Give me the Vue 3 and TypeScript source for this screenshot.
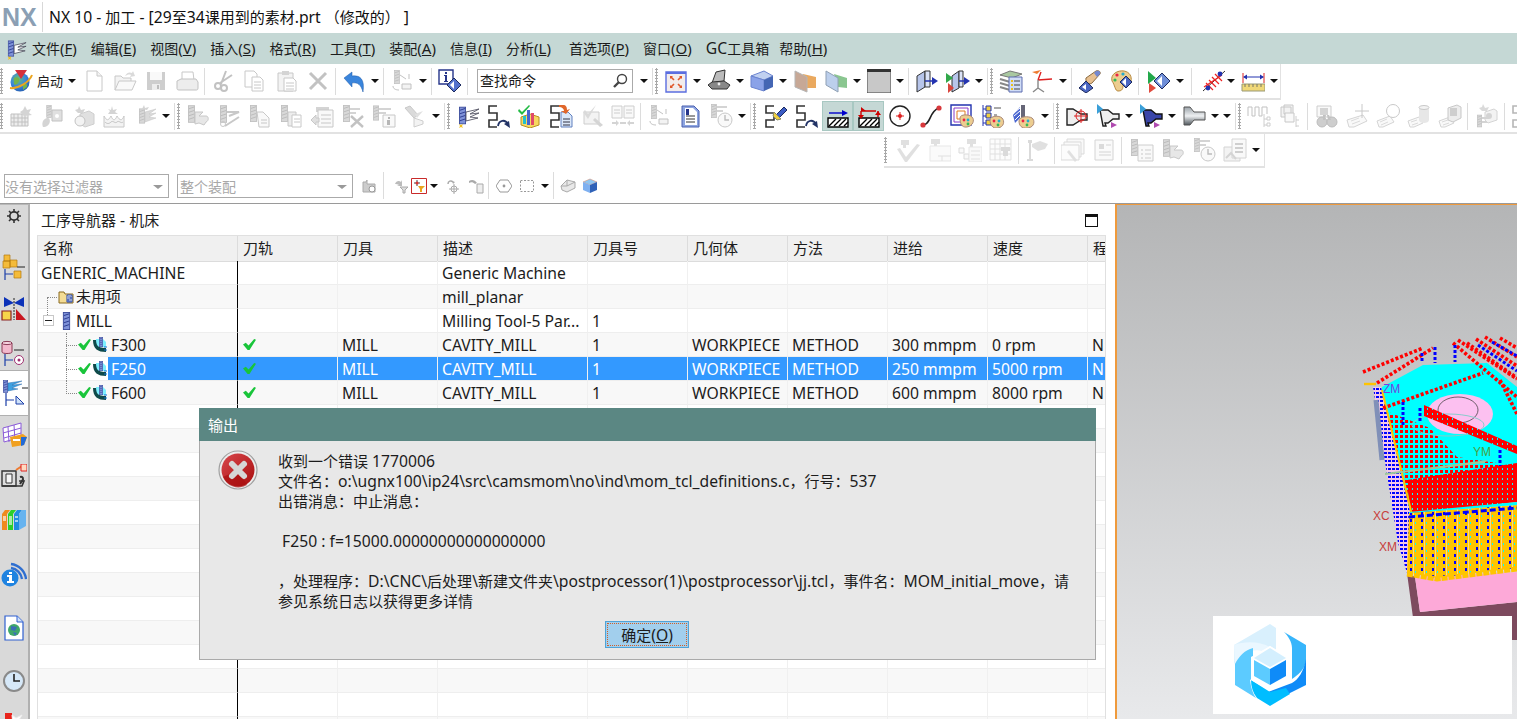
<template>
  <div class="app">
    <svg class="defs" aria-hidden="true">
      <defs>
        <linearGradient id="g-red" x1="0" y1="0" x2="1" y2="1"><stop offset="0" stop-color="#d8474c" /><stop offset="1" stop-color="#a80d0d" /></linearGradient>
        <radialGradient id="g-ball" cx=".4" cy=".35" r=".8"><stop offset="0" stop-color="#6cc070" /><stop offset=".5" stop-color="#3a86dc" /><stop offset="1" stop-color="#1d4fa0" /></radialGradient>
        <linearGradient id="g-steel" x1="0" y1="0" x2="0" y2="1"><stop offset="0" stop-color="#9aa2a8" /><stop offset=".5" stop-color="#eef0f2" /><stop offset="1" stop-color="#4e565c" /></linearGradient>
        <pattern id="p-red" width="5" height="5" patternUnits="userSpaceOnUse"><rect width="5" height="5" fill="#00ffff" shape-rendering="crispEdges" /><rect width="3" height="3" fill="#ff0000" shape-rendering="crispEdges" /></pattern>
        <pattern id="p-solid" width="5" height="5" patternUnits="userSpaceOnUse"><rect width="5" height="5" fill="#ff0000" shape-rendering="crispEdges" /><rect x="2" y="3" width="1" height="2" fill="#00ffff" shape-rendering="crispEdges" /></pattern>
        <pattern id="p-blue" width="4" height="4" patternUnits="userSpaceOnUse"><rect width="4" height="4" fill="#f4c8e8" shape-rendering="crispEdges" /><rect width="3" height="2" fill="#0000ff" shape-rendering="crispEdges" /></pattern>
        <pattern id="p-orange" width="11" height="7" patternUnits="userSpaceOnUse"><rect width="11" height="7" fill="#ffc400" shape-rendering="crispEdges" /><rect x="2" y="1" width="2" height="3" fill="#0000ff" shape-rendering="crispEdges" /><rect x="7" y="4" width="1" height="2" fill="#00ffff" shape-rendering="crispEdges" /><rect x="5" y="0" width="1" height="7" fill="#f8d890" shape-rendering="crispEdges" /></pattern>

        <symbol id="mill" viewBox="0 0 8 20"><rect x=".5" y=".5" width="7" height="19" fill="#7f92d8" stroke="#3a4a9a" /><path d="M1 4l6-2M1 8l6-2M1 12l6-2M1 16l6-2" stroke="#26358a" /></symbol>
        <symbol id="i-globe" viewBox="0 0 24 24"><circle cx="11" cy="13" r="9.5" fill="url(#g-ball)" /><path d="M5 9c3-2 6 0 5 3s-4 5-5 3zM14 15c3-1 5 0 4 3l-4 3z" fill="#74b44a" /><path d="M1 19C8 20 20 14 23 6" stroke="#eba51f" stroke-width="2" fill="none" /><path d="M6 1h12l-6 9z" fill="#d5303d" /></symbol>
        <symbol id="i-doc" viewBox="0 0 24 24"><path d="M5 2h10l5 5v15H5z" fill="#fff" stroke="#666" /><path d="M15 2v5h5" fill="#ddd" stroke="#666" /></symbol>
        <symbol id="i-open" viewBox="0 0 24 24"><path d="M2 21V7h6l2 2h8v3" fill="#ddd" stroke="#666" /><path d="M2 21l4-9h17l-4 9z" fill="#eee" stroke="#666" /><path d="M12 7c2-4 5-4 7-3l1-2 2 5-5 1 1-2c-2-1-4 0-6 1z" fill="#999" /></symbol>
        <symbol id="i-save" viewBox="0 0 24 24"><path d="M3 3h18v18H3z" fill="#777" /><path d="M6 3h12v8H6z" fill="#eee" /><path d="M8 15h8v6H8z" fill="#ccc" /><path d="M13 16h2v4h-2z" fill="#444" /></symbol>
        <symbol id="i-print" viewBox="0 0 24 24"><path d="M7 3h11l1 8H7z" fill="#fff" stroke="#666" /><path d="M2 12l4-2h15l2 3v6c0 2-1 2-2 2H4c-2 0-2-1-2-2z" fill="#ccc" stroke="#555" /></symbol>
        <symbol id="i-cut" viewBox="0 0 24 24"><path d="M15 2l-5 13M21 6L9 14" stroke="#555" stroke-width="2" /><circle cx="7" cy="17" r="3" fill="none" stroke="#555" stroke-width="2" /><circle cx="13" cy="19" r="3" fill="none" stroke="#555" stroke-width="2" /></symbol>
        <symbol id="i-copy" viewBox="0 0 24 24"><path d="M3 2h9l3 3v13H3z" fill="#fff" stroke="#666" /><path d="M10 8h8l3 3v11H10z" fill="#fff" stroke="#666" /><path d="M12 13h7M12 16h7M12 19h7" stroke="#666" /></symbol>
        <symbol id="i-paste" viewBox="0 0 24 24"><path d="M3 4h15v18H3z" fill="#ddd" stroke="#666" /><path d="M7 2h7v4H7z" fill="#888" /><path d="M9 9h9l3 3v10H9z" fill="#fff" stroke="#666" /><path d="M11 14h8M11 17h8M11 20h8" stroke="#666" /></symbol>
        <symbol id="i-x" viewBox="0 0 24 24"><path d="M4 4l16 16M20 4L4 20" stroke="#555" stroke-width="3" /></symbol>
        <symbol id="i-undo" viewBox="0 0 24 24"><path d="M2 9l8-6v4c8-1 13 3 11 16-2-7-5-10-11-9v4z" fill="#3a85dc" stroke="#1f5aa8" stroke-width=".5" /></symbol>
        <symbol id="i-mach" viewBox="0 0 24 24"><use href="#mill" x="4" y="1" width="6" height="14" /><path d="M10 6l6 4M12 15h9v5h-9z" fill="#ddd" stroke="#555" /><path d="M3 17c0 3 3 4 6 4M19 5v5" stroke="#555" fill="none" /></symbol>
        <symbol id="i-info" viewBox="0 0 24 24"><path d="M1 1h14v14H1z" fill="#fff" stroke="#26358a" stroke-width="1.4" /><path d="M7 3h2v2H7zM6 6h3v6h1v1H6v-1h1V7H6z" fill="#26358a" /><path d="M16 9l7 7-7 7-7-7z" fill="#5472cc" stroke="#1c2a5e" /><path d="M16 12v8l-4-4z" fill="#fff" /></symbol>
        <symbol id="i-search" viewBox="0 0 16 16"><circle cx="10" cy="6" r="4.5" fill="#fff" stroke="#444" stroke-width="1.4" /><path d="M7 9l-5 5" stroke="#444" stroke-width="2.4" /></symbol>
        <symbol id="i-fit" viewBox="0 0 24 24"><path d="M2 3h20v20H2z" fill="#f2ecec" stroke="#5b6ee0" stroke-width="1.4" /><path d="M2 3h20v2H2z" fill="#5b6ee0" /><path d="M7 8l3 3M17 8l-3 3M7 18l3-3M17 18l-3-3" stroke="#e0572a" stroke-width="1.6" /><path d="M6 7h3L6 10zM18 7h-3l3 3zM6 19h3l-3-3zM18 19h-3l3-3z" fill="#e0572a" /></symbol>
        <symbol id="i-laptop" viewBox="0 0 24 24"><path d="M5 14L9 3l9-2-1 11z" fill="#bbb" stroke="#333" /><path d="M1 16l4-3 12-1 6 4-3 4H5z" fill="#888" stroke="#333" /><circle cx="12" cy="15" r="1.4" fill="#eee" /></symbol>
        <symbol id="i-cube" viewBox="0 0 24 24"><path d="M1 7l13-5 9 5-9 4z" fill="#c0d0f0" stroke="#6a83cf" /><path d="M1 7l13 4v11L1 18z" fill="#8aa2e8" stroke="#6a83cf" /><path d="M14 11l9-4v11l-9 4z" fill="#4466b4" /></symbol>
        <symbol id="i-twoa" viewBox="0 0 24 24"><path d="M10 5l13 3v11H12z" fill="#eaa95f" /><path d="M2 2l12 6v15L2 18z" fill="#c7a896" stroke="#b5b5b5" /></symbol>
        <symbol id="i-twob" viewBox="0 0 24 24"><path d="M10 5l13 4v10l-9-1z" fill="#8ac690" /><path d="M2 2l12 7v14L2 16z" fill="#bccfec" stroke="#8fa0b4" /></symbol>
        <symbol id="i-gray" viewBox="0 0 24 24"><path d="M0 1h24v23H0z" fill="#c8c8c8" stroke="#444" /><path d="M0 0h24v3H0z" fill="#333" /></symbol>
        <symbol id="i-boxarr" viewBox="0 0 24 24"><path d="M2 7l8-5v16l-8 5z" fill="#b7c5ea" stroke="#333" /><path d="M10 2h5v16h-5z" fill="#dbe3f7" stroke="#333" /><path d="M10 12h8" stroke="#2333b0" stroke-width="1.5" /><path d="M17 8l6 4-6 4z" fill="#2333b0" /></symbol>
        <symbol id="i-boxplay" viewBox="0 0 24 24"><path d="M6 7l7-5v17l-7 4z" fill="#b7c5ea" stroke="#333" /><path d="M13 2h4v16h-4z" fill="#dbe3f7" stroke="#333" /><path d="M13 12h6" stroke="#2333b0" stroke-width="1.5" /><path d="M18 8l6 4-6 4z" fill="#2333b0" /><path d="M0 4l7 5-7 5z" fill="#31a84a" /><path d="M2 14l6 5-6 5z" fill="#d9453d" /></symbol>
        <symbol id="i-stack" viewBox="0 0 24 24"><path d="M1 6l10-4 12 3-10 4z" fill="#a9c8a0" stroke="#777" /><path d="M1 10l10 3M1 14l10 3M1 18l10 3" stroke="#888" stroke-width="2" /><path d="M10 8h13v15H10z" fill="#d0dcf6" stroke="#5c6cb0" /><path d="M12 11h2v2h-2zM12 15h2v2h-2zM12 19h2v2h-2z" fill="#e8c020" /><path d="M15 12h6M15 16h6M15 20h6" stroke="#444" /></symbol>
        <symbol id="i-axis" viewBox="0 0 24 24"><path d="M8 11l14-1M8 11l3-8" stroke="#d22" stroke-width="1.4" /><path d="M2 3l9-2-4 4z" fill="#ee7a30" /><path d="M8 11v8l-5 4M8 19l6 4" stroke="#888" stroke-width="1.4" fill="none" /></symbol>
        <symbol id="i-hand" viewBox="0 0 24 24"><path d="M8 9l10-7c3-1 5 1 4 3l-8 9c-2 2-7 0-6-5z" fill="#e8c090" stroke="#8a6a40" /><path d="M18 2c3-1 5 1 4 3l-3 3-3-4z" fill="#7488d0" /><path d="M8 12l7 7-7 5-7-5z" fill="#4b66c2" stroke="#1c2a5e" /><path d="M8 15v6l-4-3z" fill="#fff" /></symbol>
        <symbol id="i-pal" viewBox="0 0 24 24"><path d="M3 12C1 5 9 1 15 2s8 6 7 10-8 1-8 5-2 5-5 5-3-6-6-10z" fill="#eccd90" stroke="#b88a40" /><circle cx="8" cy="6" r="1.6" fill="#e24" /><circle cx="14" cy="5" r="1.6" fill="#2ac" /><circle cx="6" cy="11" r="1.6" fill="#3b5" /><path d="M17 7l6 6-6 6-6-6z" fill="#4b66c2" stroke="#1c2a5e" /><path d="M17 9v8l-4-4z" fill="#fff" /></symbol>
        <symbol id="i-playd" viewBox="0 0 24 24"><path d="M1 2l8 7-8 6z" fill="#22a84a" /><path d="M2 14l7 5-7 5z" fill="#e04a3d" /><path d="M15 4l8 8-8 8-8-8z" fill="#6f8ed8" stroke="#1c2a5e" /><path d="M15 7v10l-5-5z" fill="#fff" /></symbol>
        <symbol id="i-spring" viewBox="0 0 24 24"><path d="M1 22L23 2" stroke="#333" /><path d="M4 14l7 7M7 11l7 7M10 8l7 7M13 5l7 7M2 18L20 6" stroke="#e22" stroke-width="1.2" /><circle cx="18" cy="5" r="2.4" fill="#2333b0" /><circle cx="6" cy="19" r="2.4" fill="#2333b0" /></symbol>
        <symbol id="i-measure" viewBox="0 0 24 24"><path d="M2 4v10M23 4v10" stroke="#d22" /><path d="M3 8h19" stroke="#2333b0" /><path d="M2 8l4-2.5v5zM23 8l-4-2.5v5z" fill="#2333b0" /><path d="M1 15h23v7H1z" fill="#f0d878" stroke="#997" /><path d="M4 15v3M8 15v3M12 15v3M16 15v3M20 15v3" stroke="#776" /></symbol>
        <symbol id="i-mgrid" viewBox="0 0 24 24"><path d="M2 10h17v12H2z" fill="#ccc" stroke="#555" /><path d="M5 10v12M9 10v12M13 10v12M16 10v12M2 14h17M2 18h17" stroke="#555" /><path d="M16 2l2 4 4-1-2 4 3 2-8 1-4-4 3-2z" fill="#888" /></symbol>
        <symbol id="i-mpart" viewBox="0 0 24 24"><use href="#mill" x="6" y="1" width="6" height="13" /><path d="M12 6h10v11H12z" fill="#aaa" stroke="#555" /><circle cx="17" cy="12" r="2" fill="#fff" /><path d="M3 23c-2-5 1-9 5-9 3 0 3 9-5 9z" fill="#888" /></symbol>
        <symbol id="i-mcam" viewBox="0 0 24 24"><path d="M9 10l9-3 5 3v10l-9 3-5-3z" fill="#aaa" stroke="#777" /><circle cx="9" cy="17" r="5" fill="#ddd" stroke="#555" /><path d="M8 2l2 4 4-1-2 4h-5l-3-3 3-1z" fill="#888" /></symbol>
        <symbol id="i-mwave" viewBox="0 0 24 24"><path d="M2 12c3 5 4 5 7 0 2 5 4 5 6 0 3 5 5 5 7 0v11H2z" fill="#ddd" stroke="#666" /><path d="M3 18c2 2 4 2 6 0s4 2 6 0 4 2 6 0" fill="none" stroke="#555" /><path d="M10 2l1 4 4-1-2 3 3 2h-10l2-3-2-2 3 1z" fill="#888" /></symbol>
        <symbol id="i-mtool" viewBox="0 0 24 24"><use href="#mill" x="6" y="3" width="6" height="18" /><path d="M12 8l11-3-7 5 7-1-7 4 7 1-11 4z" fill="#999" stroke="#555" stroke-width=".5" /><path d="M11 1l1 3 4-1-2 3-5-1z" fill="#888" /></symbol>
        <symbol id="i-twrench" viewBox="0 0 24 24"><use href="#mill" x="2" y="1" width="7" height="18" /><path d="M9 8h8l-4 4h7c3 0 3 5 0 6l-2 3-5-2-4 1z" fill="#bbb" stroke="#666" /></symbol>
        <symbol id="i-tcut" viewBox="0 0 24 24"><use href="#mill" x="3" y="1" width="7" height="18" /><path d="M10 8h12l-10 4M8 22l14-9" stroke="#666" stroke-width="2" fill="none" /><circle cx="6" cy="20" r="2.5" fill="none" stroke="#666" /></symbol>
        <symbol id="i-tcopy" viewBox="0 0 24 24"><use href="#mill" x="2" y="1" width="7" height="17" /><path d="M9 8h6l6 6v9H11z" fill="#eee" stroke="#666" /><path d="M13 16h6M13 19h6" stroke="#666" /></symbol>
        <symbol id="i-tpaste" viewBox="0 0 24 24"><use href="#mill" x="2" y="1" width="7" height="17" /><path d="M9 8h8v14H9z" fill="#ccc" stroke="#666" /><path d="M13 11h9v12h-9z" fill="#fff" stroke="#666" /><path d="M15 15h6M15 18h6" stroke="#666" /></symbol>
        <symbol id="i-tdoc" viewBox="0 0 24 24"><path d="M6 3h13v5H6z" fill="#888" /><path d="M8 6h15v17H8z" fill="#eee" stroke="#666" /><path d="M11 11h10M11 15h10M11 19h10" stroke="#666" /><path d="M1 16l5-5v3h3v4H6v3z" fill="#aaa" stroke="#666" /></symbol>
        <symbol id="i-tx" viewBox="0 0 24 24"><use href="#mill" x="2" y="1" width="7" height="17" /><path d="M9 5h10M9 9h6" stroke="#888" stroke-width="2" /><path d="M10 12l12 11M22 12L10 23" stroke="#555" stroke-width="2.4" /></symbol>
        <symbol id="i-tinfo" viewBox="0 0 24 24"><use href="#mill" x="1" y="1" width="6" height="16" /><path d="M7 5h12M7 9h7" stroke="#888" stroke-width="2" /><path d="M11 11h12v12H11z" fill="#eee" stroke="#666" /><path d="M16 13h2v2h-2zM15 16h3v5h-3z" fill="#333" /></symbol>
        <symbol id="i-tdown" viewBox="0 0 24 24"><path d="M2 4l5-2 8 9-4 3z" fill="#999" stroke="#666" /><path d="M11 14v9l9-3v-3z" fill="#ddd" stroke="#777" /><path d="M12 10l8-3-6 7z" fill="#aaa" /></symbol>
        <symbol id="i-millp" viewBox="0 0 24 24"><use href="#mill" x="3" y="2" width="7" height="19" /><path d="M10 8l13-3-9 5 9-1-9 4 8 1-12 3z" fill="#fff" stroke="#445" stroke-width=".8" /><path d="M3 20l2 1 2-1-1 2 1 2-2-1-2 1 1-2z" fill="#f0c020" /></symbol>
        <symbol id="i-snake" viewBox="0 0 24 24"><path d="M10 2H2v7h8v7H2v7h8" fill="none" stroke="#333" stroke-width="1.6" /></symbol>
        <symbol id="i-snakearr" viewBox="0 0 24 24"><use href="#i-snake" /><path d="M11 22c1-6 7-7 10-2" fill="none" stroke="#223366" stroke-width="1.8" /><path d="M23 24l-1-7-5 3z" fill="#223366" /></symbol>
        <symbol id="i-checkbox" viewBox="0 0 24 24"><path d="M3 13l9-3 9 3v8l-9 3-9-3z" fill="#f6d860" stroke="#b89020" /><path d="M9 6h3v15H9z" fill="#4565d0" /><path d="M13 9h3v12h-3z" fill="#e04a6a" /><path d="M5 12h3v8H5z" fill="#20c0d0" /><path d="M1 5l3 3 7-7 1 1-8 9-4-4z" fill="#22bb44" /></symbol>
        <symbol id="i-snakedoc" viewBox="0 0 24 24"><use href="#i-snake" /><path d="M12 8h7l4 4v11H12z" fill="#dbe7f8" stroke="#6080c0" /><path d="M14 15h7M14 18h7M14 21h7" stroke="#334" /><path d="M10 1h4c3 0 4 2 4 5l3-1-4 5-5-3h3c0-2-2-4-5-4z" fill="#e0662a" /></symbol>
        <symbol id="i-verify" viewBox="0 0 24 24"><path d="M4 8h15v12H4z" fill="#ddd" stroke="#777" /><path d="M5 6l3 4 8-9-8 14-5-7z" fill="#999" /><path d="M15 14l8 7-3 2-7-7z" fill="#888" /></symbol>
        <symbol id="i-docs" viewBox="0 0 24 24"><path d="M1 2h10v12H1zM13 2h10v12H13z" fill="#eee" stroke="#777" /><path d="M3 6h6M3 9h6M15 6h6M15 9h6" stroke="#777" /><path d="M1 18h4v-2l3 3-3 3v-2H1zM23 18h-4v-2l-3 3 3 3v-2h4z" fill="#888" /><path d="M9 18h6v2H9z" fill="#888" /></symbol>
        <symbol id="i-docblue" viewBox="0 0 24 24"><path d="M4 2h12l5 5v16H4z" fill="#8ea5e0" stroke="#4a60b0" /><path d="M7 4h8l4 4v13H7z" fill="#fff" /><path d="M8 12h9M8 15h9M8 18h9" stroke="#333" /><path d="M8 5h3v6H8z" fill="#26358a" /></symbol>
        <symbol id="i-tclock" viewBox="0 0 24 24"><use href="#mill" x="2" y="0" width="6" height="14" /><path d="M8 3h10M8 7h6" stroke="#888" stroke-width="2" /><circle cx="16" cy="16" r="7" fill="#eee" stroke="#666" /><path d="M16 11v5h4" stroke="#444" stroke-width="1.4" fill="none" /></symbol>
        <symbol id="i-snakelight" viewBox="0 0 24 24"><use href="#i-snake" /><path d="M12 11l8-8 3 3-8 8z" fill="#3b5cc4" stroke="#1c2a5e" /><path d="M10 8l7 7-4 1-4-4z" fill="#f0d040" stroke="#886" /></symbol>
        <symbol id="i-hatchb" viewBox="0 0 24 24"><path d="M2 14h20v9H2z" fill="#fff" stroke="#000" stroke-width="1.4" /><path d="M3 22l7-7M8 22l7-7M13 22l7-7M18 22l4-4" stroke="#000" stroke-width="1.4" /><path d="M3 9h14" stroke="#0000cc" stroke-width="1.4" /><path d="M16 6l6 3-6 3z" fill="#0000cc" /></symbol>
        <symbol id="i-hatchr" viewBox="0 0 24 24"><path d="M2 14h20v9H2z" fill="#fff" stroke="#000" stroke-width="1.4" /><path d="M3 22l7-7M8 22l7-7M13 22l7-7M18 22l4-4" stroke="#000" stroke-width="1.4" /><path d="M4 7h15M4 7v6M21 7v6" stroke="#cc0000" stroke-width="1.4" /><path d="M4 3L9 7 4 7zM1 11h6l-3 4zM18 11h6l-3-4z" fill="#cc0000" /></symbol>
        <symbol id="i-target" viewBox="0 0 24 24"><circle cx="12" cy="12" r="10" fill="#fff" stroke="#222" stroke-width="1.4" /><path d="M12 8v8M8 12h8" stroke="#d22" /><circle cx="12" cy="12" r="2" fill="#d22" /></symbol>
        <symbol id="i-curve" viewBox="0 0 24 24"><path d="M4 21c8 0 6-14 16-17" fill="none" stroke="#222" stroke-width="1.6" /><circle cx="4" cy="21" r="2.6" fill="#d8383c" /><circle cx="20" cy="4" r="2.6" fill="#d8383c" /></symbol>
        <symbol id="i-sqpal" viewBox="0 0 24 24"><path d="M1 1h20v20H1z" fill="#fff" stroke="#2333b0" stroke-width="1.4" /><path d="M4 4h14v14H4z" fill="none" stroke="#8a3bc8" /><path d="M7 7h8v8H7z" fill="none" stroke="#e07a20" /><path d="M10 14c0-4 9-4 12-1s1 9-5 10-7-5-7-9z" fill="#eccd90" stroke="#a87" /><circle cx="14" cy="16" r="1.4" fill="#e24" /><circle cx="18" cy="16" r="1.4" fill="#2ac" /><circle cx="18" cy="20" r="1.4" fill="#3b5" /></symbol>
        <symbol id="i-treepal" viewBox="0 0 24 24"><path d="M2 1v21M2 5h3M2 12h3M2 19h3" stroke="#2333b0" /><path d="M5 2h5v5H5zM5 9h5v5H5zM5 16h5v5H5z" fill="#f0d040" stroke="#2333b0" /><path d="M13 4h7M13 11h3" stroke="#555" /><path d="M9 16c0-4 9-5 12-2s2 9-4 10-8-4-8-8z" fill="#eccd90" stroke="#a87" /><circle cx="13" cy="17" r="1.4" fill="#e24" /><circle cx="18" cy="17" r="1.4" fill="#2ac" /><circle cx="17" cy="21" r="1.4" fill="#3b5" /></symbol>
        <symbol id="i-toolpal" viewBox="0 0 24 24"><path d="M1 11L8 3v11l-5 5z" fill="#4a66d0" /><path d="M3 8l5-4M2 12l6-5M3 16l5-5" stroke="#fff" /><path d="M9 1h4v14H9z" fill="#667" /><path d="M7 17c0-5 10-5 13-3s3 9-4 10-9-3-9-7z" fill="#eccd90" stroke="#a87" /><circle cx="11" cy="17" r="1.4" fill="#e24" /><circle cx="16" cy="17" r="1.4" fill="#2ac" /><circle cx="15" cy="21" r="1.4" fill="#3b5" /></symbol>
        <symbol id="i-shapet" viewBox="0 0 24 24"><path d="M2 5h6l8 5h6v6h-6l-8 5H2z" fill="#eee" stroke="#222" stroke-width="1.4" /><circle cx="16" cy="12" r="5" fill="none" stroke="#d22" /><path d="M16 5v14M9 12h14" stroke="#d22" /></symbol>
        <symbol id="i-shapea" viewBox="0 0 24 24"><path d="M4 6h8l5 4h6v5h-6l-5 4H9l1 3H7z" fill="#eee" stroke="#222" stroke-width="1.4" /><path d="M1 0l6 5-6 5z" fill="#3a9fd8" /><path d="M15 18l6 3-6 3z" fill="#b04ab0" /></symbol>
        <symbol id="i-shapeb" viewBox="0 0 24 24"><path d="M4 6h8l5 4h6v5h-6l-5 4H9l1 3H7z" fill="#3a45a8" stroke="#111" stroke-width="1.4" /><path d="M1 0l6 5-6 5z" fill="#3a9fd8" /><path d="M15 18l6 3-6 3z" fill="#b04ab0" /></symbol>
        <symbol id="i-shapec" viewBox="0 0 24 24"><path d="M2 3h6l4 5h11v8H12l-4 5H2z" fill="url(#g-steel)" stroke="#555" /></symbol>
        <symbol id="i-steps" viewBox="0 0 24 24"><path d="M1 12V3h4v9h3V3h4v9h3V3h5v7" fill="none" stroke="#555" /><path d="M17 10v13M17 15h4M17 21h4" stroke="#777" /><path d="M20 13h3v3h-3zM20 19h3v3h-3z" fill="#fff" stroke="#777" /></symbol>
        <symbol id="i-boxtree" viewBox="0 0 24 24"><path d="M3 3h10v10H3zM6 1h9v9H6z" fill="#ddd" stroke="#666" /><path d="M7 9h9v9H7z" fill="#eee" stroke="#666" /><path d="M18 12v11M18 16h3M18 22h3" stroke="#777" /></symbol>
        <symbol id="i-binoc" viewBox="0 0 24 24"><path d="M3 2h14v11H3z" fill="#eee" stroke="#777" /><path d="M6 4h8v7H6z" fill="#888" /><circle cx="8" cy="18" r="5" fill="#777" stroke="#444" /><circle cx="18" cy="18" r="5" fill="#777" stroke="#444" /><path d="M9 11h3l-1 5h-2zM13 11h2l2 5h-3z" fill="#555" /></symbol>
        <symbol id="i-tagplus" viewBox="0 0 24 24"><path d="M2 16l16-5 4 6-13 6H4z" fill="#eee" stroke="#888" /><path d="M6 17l8-3M7 20l8-3" stroke="#999" /><path d="M17 0v14M10 7h14" stroke="#666" /></symbol>
        <symbol id="i-tagcirc" viewBox="0 0 24 24"><path d="M1 17l13-5 4 6-11 5H3z" fill="#eee" stroke="#888" /><path d="M4 18l7-3M5 21l7-3" stroke="#999" /><circle cx="17" cy="7" r="6.5" fill="#fff" stroke="#666" /></symbol>
        <symbol id="i-tagcyl" viewBox="0 0 24 24"><path d="M1 17l11-4 4 6-9 4H3z" fill="#eee" stroke="#888" /><path d="M4 18l6-2M5 21l6-2" stroke="#999" /><path d="M12 3h10v13c0 4-10 4-10 0z" fill="#bbb" /><ellipse cx="17" cy="3.5" rx="5" ry="2" fill="#ddd" stroke="#666" /></symbol>
        <symbol id="i-tagbox" viewBox="0 0 24 24"><path d="M1 17l11-4 4 6-9 4H3z" fill="#eee" stroke="#888" /><path d="M4 18l6-2M5 21l6-2" stroke="#999" /><path d="M10 4l9-3 4 2v11l-8 4-5-2z" fill="#ccc" stroke="#666" /><path d="M12 4h7v8h-7z" fill="#777" /></symbol>
        <symbol id="i-camt" viewBox="0 0 24 24"><path d="M11 8l9-3 3 2v9l-9 3-3-3z" fill="#ddd" stroke="#888" /><circle cx="15" cy="12" r="3" fill="#888" /><path d="M9 0l2 4 4-1-2 4H8L5 4l3-1z" fill="#999" /><use href="#mill" x="3" y="10" width="5" height="14" /><path d="M8 14h7M8 18h5" stroke="#888" stroke-width="2" /></symbol>
        <symbol id="i-pcheck" viewBox="0 0 24 24"><path d="M5 2h8v5h-3v3H7V7H5z" fill="#aaa" /><path d="M1 11l3-1 6 9L21 6l3 1-13 17h-2z" fill="#aaa" /></symbol>
        <symbol id="i-pbox" viewBox="0 0 24 24"><path d="M4 1h9v5h-3v4H7V6H4z" fill="#aaa" /><path d="M3 8h21v15H3z" fill="#f2f2f2" stroke="#bbb" /><path d="M11 18h13M15 18v5" stroke="#aaa" /></symbol>
        <symbol id="i-ptree" viewBox="0 0 24 24"><path d="M9 1h9v5h-3v4h-3V6H9z" fill="#aaa" /><path d="M1 10h5v5H1zM6 16h5v5H6z" fill="#eee" stroke="#999" /><path d="M11 9h13v15H11z" fill="#eee" stroke="#bbb" /><path d="M13 13h9M13 17h9M13 21h9" stroke="#aaa" /></symbol>
        <symbol id="i-pgrid" viewBox="0 0 24 24"><path d="M1 1h21v21H1z" fill="#f6f6f6" stroke="#aaa" /><path d="M6 1v21M11 1v21M16 1v21M1 6h21M1 11h21M1 16h21" stroke="#aaa" /><path d="M12 9h9v4h-2v5h-5v-5h-2z" fill="#999" /></symbol>
        <symbol id="i-flag" viewBox="0 0 24 24"><path d="M3 2h4v3H6v16h2v2H2v-2h2V5H3z" fill="#999" /><path d="M7 6l8-3 8 3-3 5-7 2-6-4z" fill="#aaa" /></symbol>
        <symbol id="i-sheets" viewBox="0 0 24 24"><path d="M6 1h17v15H6z" fill="#eee" stroke="#999" /><path d="M3 4h17v15H3z" fill="#f2f2f2" stroke="#999" /><path d="M0 7h18v15H0z" fill="#f6f6f6" stroke="#999" /><path d="M8 12l8 10-2 2-8-10z" fill="#aaa" /></symbol>
        <symbol id="i-sheet" viewBox="0 0 24 24"><path d="M3 2h18v20H3z" fill="#f2f2f2" stroke="#888" /><path d="M7 6h5v5H7z" fill="#999" /><path d="M14 7h5M7 14h12M7 17h12" stroke="#888" /></symbol>
        <symbol id="i-tlist" viewBox="0 0 24 24"><use href="#mill" x="1" y="1" width="7" height="17" /><path d="M8 7h15v16H8z" fill="#eee" stroke="#777" /><path d="M11 11h2v2h-2zM11 15h2v2h-2zM11 19h2v2h-2z" fill="#aaa" /><path d="M15 12h6M15 16h6M15 20h6" stroke="#777" /></symbol>
        <symbol id="i-tdocs" viewBox="0 0 24 24"><path d="M1 9h16v14H1z" fill="#ddd" stroke="#888" /><path d="M9 1h14v19H9z" fill="#eee" stroke="#888" /><path d="M12 6h8M12 10h8M12 14h8" stroke="#555" stroke-width="1.5" /><path d="M3 20l5-5 5 6" fill="none" stroke="#888" stroke-width="2" /></symbol>

        <symbol id="s-dots" viewBox="0 0 16 16"><path d="M2 4h3l1-2v4h8v8H2z" fill="#ccc" stroke="#aaa" /><circle cx="11" cy="11" r="3" fill="#fff" stroke="#999" /></symbol>
        <symbol id="s-fa" viewBox="0 0 16 16"><path d="M2 6c1-3 4-4 6-2l1-2v6H4l2-1c-1-1-3-1-4-1z" fill="#bbb" /><path d="M7 9h8l-3 3v3h-2v-3z" fill="#ddd" stroke="#aaa" /></symbol>
        <symbol id="s-fb" viewBox="0 0 16 16"><path d="M.5.5h15v15H.5z" fill="#fff" stroke="#c92a2a" /><path d="M6 2v6M3 5h6" stroke="#444" /><circle cx="6" cy="5" r="1.5" fill="#d33" /><path d="M7 8h7l-3 3v3H9v-3z" fill="#eba51f" /></symbol>
        <symbol id="s-fc" viewBox="0 0 16 16"><path d="M3 6c0-3 3-4 5-2" fill="none" stroke="#aaa" stroke-width="1.5" /><path d="M8 6l-1-3 3 1z" fill="#aaa" /><circle cx="9" cy="11" r="3" fill="none" stroke="#aaa" /><path d="M9 6v10M4 11h10" stroke="#aaa" /></symbol>
        <symbol id="s-fd" viewBox="0 0 16 16"><path d="M1 3c3-2 6-1 8 2l-2 1C5 4 3 4 1 5z" fill="#aaa" /><path d="M9 6h6v9H9z" fill="#eee" stroke="#aaa" /></symbol>
        <symbol id="s-hex" viewBox="0 0 16 16"><path d="M4 2h8l4 6-4 6H4L0 8z" fill="#fff" stroke="#999" /><circle cx="8" cy="8" r="1.4" fill="#999" /></symbol>
        <symbol id="s-rect" viewBox="0 0 16 16"><path d="M1.5 2.5h13v11h-13z" fill="none" stroke="#999" stroke-dasharray="2 1.5" /></symbol>
        <symbol id="s-box" viewBox="0 0 16 16"><path d="M1 8l6-6 8 2v6l-8 4-5-2z" fill="#e8e8e8" stroke="#aaa" /><path d="M7 2v6l8-4M7 8L1 8" stroke="#aaa" fill="none" /></symbol>
        <symbol id="s-cube" viewBox="0 0 16 16"><path d="M1 4l7-3 7 3-7 3z" fill="#8fc6f2" stroke="#d86" stroke-width=".5" /><path d="M1 4l7 3v8l-7-3z" fill="#7fb0f0" /><path d="M8 7l7-3v8l-7 3z" fill="#2f62b8" /></symbol>

        <symbol id="r-gear" viewBox="0 0 16 16"><circle cx="8" cy="8" r="4.2" fill="none" stroke="#333" stroke-width="1.8" /><path d="M8 1v3M8 12v3M1 8h3M12 8h3M3 3l2 2M11 11l2 2M13 3l-2 2M3 13l2-2" stroke="#333" stroke-width="1.6" /></symbol>
        <symbol id="r-cubes" viewBox="0 0 26 26"><path d="M3 1h6v6H3zM9 6h7v7H9zM2 7h7v7H2z" fill="#f4bb3a" stroke="#b37a10" stroke-width=".7" /><path d="M16 13h8" stroke="#222" /><path d="M4 15v11M4 20h8" stroke="#1c3ea8" stroke-width="1.2" /><path d="M13 17h7v7h-7z" fill="#f4bb3a" stroke="#b37a10" stroke-width=".7" /></symbol>
        <symbol id="r-bow" viewBox="0 0 26 26"><path d="M3 1l10 6 10-6v10l-10-4-10 4z" fill="#0b31b8" /><path d="M13 2v22" stroke="#222" stroke-dasharray="2 1" /><path d="M1 15h9v9H1z" fill="#f6d64a" stroke="#8a2222" stroke-width="1.2" /><path d="M15 13l10 11H15z" fill="#c9151f" /></symbol>
        <symbol id="r-cyl" viewBox="0 0 26 26"><path d="M1 3h10v9c0 2-10 2-10 0z" fill="#f3b8cc" stroke="#8a3a55" /><ellipse cx="6" cy="3" rx="5" ry="1.6" fill="#f7d4e0" stroke="#8a3a55" /><path d="M13 10h10" stroke="#222" /><path d="M4 14v12M4 20h8" stroke="#1c3ea8" stroke-width="1.2" /><circle cx="18" cy="20" r="4.5" fill="#fff" stroke="#a03070" /><circle cx="18" cy="20" r="1.5" fill="#a03070" /></symbol>
        <symbol id="r-tool" viewBox="0 0 26 26"><use href="#mill" x="1" y="0" width="5" height="13" /><path d="M6 3l14-2-10 4 10-1-10 4 6 1-10 2z" fill="#3fa0e0" stroke="#1e5ca0" stroke-width=".4" /><path d="M20 8h6" stroke="#222" /><path d="M4 13v13M4 20h8" stroke="#1c3ea8" stroke-width="1.2" /><path d="M14 16v8h8z" fill="#cfe2fa" stroke="#1c3ea8" /></symbol>
        <symbol id="r-grid" viewBox="0 0 26 26"><path d="M2 6L20 1v14L3 20z" fill="#fff" stroke="#8a5ad8" /><path d="M7 5l1 15M13 3l1 16M2 11l18-5M3 16l17-5" stroke="#8a5ad8" /><path d="M9 15l13-3 4 3-3 8-12 2z" fill="#f0a020" /><path d="M20 15l6 0-3 8-3 1z" fill="#1f6ad8" /><path d="M12 18h7" stroke="#fff" stroke-width="2" /></symbol>
        <symbol id="r-role" viewBox="0 0 26 26"><path d="M1 7h14v15H1z" fill="#ddd" stroke="#333" stroke-width="1.4" /><path d="M5 10h6v9H5z" fill="#f6f6f6" stroke="#333" /><path d="M1 22h20l2-5h-5" fill="none" stroke="#333" stroke-width="1.6" /><path d="M15 6l6-4" stroke="#ee7a30" stroke-width="2" /><path d="M20 0h6v7h-6z" fill="#ffd9c0" stroke="#d22" /><path d="M19 13c3-1 4 2 2 4l-2 3" fill="none" stroke="#333" stroke-width="2" /></symbol>
        <symbol id="r-books" viewBox="0 0 26 26"><path d="M1 7l3-4h5l-3 4v16H1z" fill="#ef8a1e" /><path d="M7 7l3-4h5l-3 4v16H7z" fill="#2bd02b" /><path d="M13 7l3-4h5l-3 4v16h-5z" fill="#1f8de0" /><path d="M18 7l3-4h4v16l-7 4z" fill="#67b3ef" /><path d="M2 9h3v5H2zM8 9h3v9H8zM14 9h3v2h-3zM14 13h3v2h-3z" fill="#fff" opacity=".6" /></symbol>
        <symbol id="r-wifi" viewBox="0 0 26 26"><path d="M10 6a13 13 0 0 1 11 11M10 2a17 17 0 0 1 15 15" transform="translate(0 1)" fill="none" stroke="#2f6fd0" stroke-width="2.4" /><circle cx="9" cy="17" r="8.5" fill="#1f83e0" /><path d="M8 11h3v2H8zM6 14h5v6h2v2H6v-2h2v-4H6z" fill="#fff" /></symbol>
        <symbol id="r-web" viewBox="0 0 26 26"><path d="M4 1h12l6 6v18H4z" fill="#fff" stroke="#3060d0" stroke-width="1.2" /><path d="M16 1v6h6" fill="#cfe0fa" stroke="#3060d0" /><circle cx="13" cy="15" r="6" fill="#3fa86a" /><path d="M10 11l6 1-2 4-4-1zM12 17l4 1-2 3z" fill="#3c6fb8" /></symbol>
        <symbol id="r-clock" viewBox="0 0 26 26"><circle cx="13" cy="13" r="10" fill="#d6e8f8" stroke="#8a8a8a" stroke-width="2" /><path d="M13 6v7h6" stroke="#222" stroke-width="1.6" fill="none" /></symbol>
        <symbol id="r-flame" viewBox="0 0 26 26"><path d="M4 3h7v7H4z" fill="#e8241c" /><path d="M4 10h7v7H4z" fill="#f4c020" /><path d="M11 5l4 3 6-3-3 5 3 3-5-1-4 3z" fill="#fff" stroke="#eee" /></symbol>

        <symbol id="t-folder" viewBox="0 0 16 16"><path d="M1 3h5l1 2h8v9H1z" fill="#f4dc94" stroke="#8a6a20" /><path d="M9 6h5v7H9z" fill="#fff" stroke="#1c3ea8" /><path d="M10 8h3M13 8v2h-3v2h3" stroke="#1c3ea8" fill="none" /></symbol>
        <symbol id="t-check" viewBox="0 0 14 14"><path d="M0 7l3-2 3 3 6-7 2 1-7 11h-2z" fill="#19c53a" /></symbol>
        <symbol id="t-op" viewBox="0 0 16 16"><path d="M1 3h5v4c0 3 3 4 8 4v4C6 15 1 12 1 3z" fill="#0f4a4a" /><path d="M4 2h7l3 3v5H8C5 10 4 6 4 2z" fill="#7df0ff" /><use href="#mill" x="7" y="0" width="4" height="10" /><path d="M12 13h3M12 10h3" stroke="#0b6fd0" /></symbol>
      </defs>
    </svg>

    <header class="titlebar">
      <div class="nx-logo">NX</div>
      <div class="title-text"><Mixed t="NX 10 - 加工 - [29至34课用到的素材.prt （修改的） ]" /></div>
    </header>

    <nav class="menubar">
      <svg class="menu-icon"><use href="#i-millp" /></svg>
      <span
        v-for="m in menus"
        :key="m.text"
        class="menu-item"
        :class="{ wide: m.wide, tight: !m.key }"
      ><Mixed :t="m.text" /><span v-if="m.key" class="lat">(<u>{{ m.key }}</u>)</span></span>
    </nav>

    <section
      v-for="bar in bars"
      :key="bar.id"
      class="toolbar"
      :class="bar.id"
    >
      <template v-for="(t, i) in bar.items" :key="i">
        <i v-if="t.kind === 'grip'" class="grip" />
        <i v-else-if="t.kind === 'sep'" class="sep" />
        <i v-else-if="t.kind === 'arrow'" class="arrow" />
        <i v-else-if="t.kind === 'gap'" class="gap" :style="{ marginLeft: t.size + 'px' }" />
        <span v-else-if="t.kind === 'start'" class="start-label">启动</span>
        <label v-else-if="t.kind === 'search'" class="search">
          <span>查找命令</span>
          <svg><use href="#i-search" /></svg>
        </label>
        <span v-else-if="t.kind === 'sel1'" class="select sel-a">没有选择过滤器<i /></span>
        <span v-else-if="t.kind === 'sel2'" class="select sel-b">整个装配<i /></span>
        <span v-else class="tool" :class="{ off: t.off, on: t.on }">
          <svg><use :href="'#' + t.icon" /></svg>
        </span>
      </template>
    </section>

    <main class="work">
      <aside class="rail">
        <div
          v-for="r in railItems"
          :key="r.icon"
          class="rail-item"
          :class="{ active: r.active, gear: r.icon === 'r-gear' }"
          :style="{ marginTop: r.gap + 'px' }"
        >
          <svg><use :href="'#' + r.icon" /></svg>
        </div>
      </aside>

      <section class="navigator">
        <div class="nav-title">
          <span><Mixed t="工序导航器 - 机床" /></span>
          <i class="maximize" />
        </div>
        <div class="table">
          <div class="thead">
            <div v-for="h in headers" :key="h" class="th">{{ h }}</div>
          </div>
          <div
            v-for="(row, i) in rows"
            :key="i"
            class="tr"
            :class="{ odd: i % 2 === 1, selected: row.selected }"
          >
            <div class="td name" :class="row.kind">
              <template v-if="row.kind === 'folder'">
                <i class="hline" /><i class="vline" />
                <svg class="ico-folder"><use href="#t-folder" /></svg>
              </template>
              <template v-else-if="row.kind === 'group'">
                <i class="minus" />
                <svg class="ico-mill"><use href="#mill" /></svg>
              </template>
              <template v-else-if="row.kind === 'op'">
                <i class="hline" /><i class="vline" :class="{ last: row.last }" />
                <svg class="ico-check"><use href="#t-check" /></svg>
                <svg class="ico-op"><use href="#t-op" /></svg>
              </template>
              <span class="label"><Mixed :t="row.name" /></span>
            </div>
            <div class="td">
              <svg v-if="row.kind === 'op'" class="ico-check path"><use href="#t-check" /></svg>
            </div>
            <div v-for="(c, j) in row.cells" :key="j" class="td lat">{{ c }}</div>
          </div>
        </div>
      </section>

      <section class="viewport">
        <svg class="scene" viewBox="1117 205 400 514">
          <polygon points="1407,573 1415,577 1420,612 1517,602 1517,640 1416,640" fill="#7d4a5e" />
          <polygon points="1415,577 1420,612 1517,602 1517,572" fill="#fda9d8" />
          <polygon points="1382,387 1423,365 1487,363 1517,387 1517,470 1457,457 1383,410" fill="#00ffff" />
          <polygon points="1383,410 1410,512 1517,500 1517,466 1457,457 1430,428" fill="url(#p-red)" />
          <polygon points="1407,480 1517,463 1517,502 1410,514" fill="url(#p-solid)" />
          <polygon points="1373,387 1381,387 1410,512 1407,573 1398,543" fill="url(#p-blue)" />
          <path d="M1376 400l6 60" stroke="#8090b8" stroke-width="5" />
          <path d="M1382 390l30 125" stroke="#ffc400" stroke-width="2" />
          <path d="M1364 384h12" stroke="#ffc400" stroke-width="2.4" />
          <polygon points="1409,513 1517,505 1517,568 1437,578 1407,573" fill="url(#p-orange)" />
          <path d="M1409 513l108-8v-3l-108 10z" fill="#00ffff" />
          <path d="M1409 517l108-9" stroke="#0000ff" stroke-width="3" stroke-dasharray="6 3" />
          <path d="M1407 574l30 5 80-10" fill="none" stroke="#ffc400" stroke-width="5" stroke-dasharray="6 1" />
          <ellipse cx="1460" cy="414" rx="33" ry="20" fill="#fcc0f0" />
          <ellipse cx="1458" cy="410" rx="20" ry="13" fill="none" stroke="#333" stroke-width=".7" />
          <ellipse cx="1448" cy="425" rx="36" ry="11" fill="none" stroke="#88cccc" />
          <polygon points="1424,405 1517,446 1517,454 1424,416" fill="url(#p-solid)" />
          <g fill="none" stroke="#ff0000" stroke-width="3.6" stroke-dasharray="3 2">
            <path d="M1363 372l60-24" />
            <path d="M1377 383l56-35" />
            <path d="M1453 343l64 54" />
            <path d="M1467 343l50 35" />
            <path d="M1458 340l59 39" />
            <path d="M1476 339l41 27" />
            <path d="M1485 337l32 20" />
            <path d="M1500 338l17 10" />
            <path d="M1383 408l100-35" />
            <path d="M1500 380l17 34" />
          </g>
          <g fill="none" stroke="#0000ff" stroke-width="3" stroke-dasharray="3 2">
            <path d="M1435 347v16" />
            <path d="M1422 353v10" />
            <path d="M1455 345v17" />
            <path d="M1403 402v24" />
            <path d="M1420 408v14" />
            <path d="M1500 450v16" />
            <path d="M1478 345l39 26" />
            <path d="M1492 342l25 14" />
          </g>
          <path d="M1385 473l103-13-4 3-99 12z" fill="#9cc89a" />
          <text x="1373" y="520" class="axis red">XC</text>
          <text x="1379" y="551" class="axis red">XM</text>
          <text x="1473" y="456" class="axis green">YM</text>
          <text x="1383" y="393" class="axis violet">ZM</text>
        </svg>
      </section>
    </main>

    <div class="dialog" role="dialog">
      <div class="dialog-head">输出</div>
      <div class="dialog-body">
        <svg class="err" viewBox="0 0 40 40">
          <circle cx="20" cy="20" r="19" fill="#ececec" stroke="#a0a0a0" stroke-width="1.2" />
          <circle cx="20" cy="20" r="16.5" fill="url(#g-red)" />
          <path d="M5 27L20 20l9 15A16.5 16.5 0 0 1 5 27z" fill="#a90f0f" opacity=".7" />
          <path d="M14 14l12 12M26 14L14 26" stroke="#d6d6d6" stroke-width="6" stroke-linecap="round" />
        </svg>
        <div class="msg">
          <p v-for="(l, i) in messageLines" :key="i"><Mixed :t="l" /></p>
        </div>
      </div>
      <div class="dialog-foot">
        <button class="ok">确定<span class="lat">(<u>O</u>)</span></button>
      </div>
    </div>

    <div class="mark">
      <svg viewBox="0 0 72 82">
        <path d="M36 0L0 21v19c6-12 18-19 30-14l6-4 6 4V4z" fill="#d9f0fd" />
        <path d="M0 21c10-4 26-4 36 2L28 27C18 24 8 30 1 44z" fill="#eaf7ff" />
        <path d="M50 8l22 13v17c-2 8-8 13-14 17V24C58 18 54 12 50 8z" fill="#37b5fb" />
        <path d="M72 35v26L52 71H26l32-12c6-3 12-12 14-24z" fill="#0f8bf8" />
        <path d="M17 56l19 12 16-4 4 6-20 12-13-8c-4-5-6-11-6-18z" fill="#00bdff" />
        <path d="M1 40c4-8 10-14 18-16v30l-3 2c1 8 3 14 6 18L1 61z" fill="#5ccbff" />
        <path d="M36 22l19 11v23L36 67 17 56V33z" fill="#fff" />
        <path d="M36 24l16 10-16 9-16-9z" fill="#d4effe" />
        <path d="M20 36l16 9v16l-16-9z" fill="#5ccbff" />
        <path d="M52 36v16l-16 9V45z" fill="#0f8bf8" />
      </svg>
    </div>
  </div>
</template>

<script setup lang="ts">
import { h } from 'vue'

type ToolKind = 'grip' | 'sep' | 'arrow' | 'gap' | 'start' | 'search' | 'sel1' | 'sel2' | 'btn'

interface Tool {
  kind: ToolKind
  icon?: string
  off?: boolean
  on?: boolean
  size?: number
}

interface Row {
  name: string
  kind?: 'folder' | 'group' | 'op'
  selected?: boolean
  last?: boolean
  cells: string[]
}

// latin runs are set a bit larger than the CJK ones, like the original UI font
const Mixed = (props: { t: string }) =>
  props.t
    .split(/([\x20-\x7e]+)/)
    .filter(Boolean)
    .map((s) => (/^[\x20-\x7e]/.test(s) ? h('span', { class: 'lat' }, s) : s))

const menus = [
  { text: '文件', key: 'F' },
  { text: '编辑', key: 'E' },
  { text: '视图', key: 'V' },
  { text: '插入', key: 'S' },
  { text: '格式', key: 'R' },
  { text: '工具', key: 'T' },
  { text: '装配', key: 'A' },
  { text: '信息', key: 'I' },
  { text: '分析', key: 'L' },
  { text: '首选项', key: 'P', wide: true },
  { text: '窗口', key: 'O' },
  { text: 'GC工具箱' },
  { text: '帮助', key: 'H' },
]

// g = grip, | = separator, v = drop arrow, _n = gap, ~ = disabled, + = pressed, @ = special
function parseBar(src: string): Tool[] {
  return src.trim().split(/\s+/).map((tok): Tool => {
    if (tok === 'g') return { kind: 'grip' }
    if (tok === '|') return { kind: 'sep' }
    if (tok === 'v') return { kind: 'arrow' }
    if (tok[0] === '_') return { kind: 'gap', size: Number(tok.slice(1)) }
    if (tok[0] === '@') return { kind: tok.slice(1) as ToolKind }
    if (tok[0] === '~') return { kind: 'btn', icon: tok.slice(1), off: true }
    if (tok[0] === '+') return { kind: 'btn', icon: tok.slice(1), on: true }
    return { kind: 'btn', icon: tok }
  })
}

const bars = [
  {
    id: 'row-a',
    items: parseBar(`g i-globe @start v ~i-doc ~i-open ~i-save ~i-print | ~i-cut ~i-copy _2 ~i-paste ~i-x |
      i-undo v | ~i-mach v | i-info | @search v | g i-fit v i-laptop v i-cube v i-twoa i-twob v i-gray v |
      i-boxarr i-boxplay v | g i-stack i-axis v | i-hand i-pal | _2 i-playd v _3 | _4 i-spring _-4 v i-measure v`),
  },
  {
    id: 'row-b',
    items: parseBar(`g ~i-mgrid ~i-mpart ~i-mcam ~i-mwave ~i-mtool v | g ~i-twrench ~i-tcut ~i-tcopy ~i-tpaste ~i-tdoc ~i-tx ~i-tinfo ~i-tdown v |
      g i-millp i-snakearr i-checkbox i-snakedoc ~i-verify ~i-docs | ~i-mach i-docblue ~i-tclock v | g _2
      i-snakelight i-snakearr +i-hatchb +i-hatchr i-target i-curve i-sqpal i-treepal i-toolpal v | g
      i-shapet i-shapea v i-shapeb v i-shapec v v | g ~i-steps ~i-boxtree | ~i-binoc ~i-tagplus ~i-tagcirc ~i-tagcyl ~i-tagbox |
      ~i-camt _1 | ~i-snake`),
  },
  {
    id: 'row-c',
    items: parseBar(`g _3 ~i-pcheck ~i-pbox ~i-ptree ~i-pgrid | ~i-flag | ~i-sheets ~i-sheet | _2 ~i-tlist ~i-twrench ~i-tclock ~i-tdocs v`),
  },
  {
    id: 'row-d',
    items: parseBar(`@sel1 @sel2 _7 s-dots _3 | _6 s-fa s-fb v _4 s-fc _5 s-fd _1 | _4 s-hex _5 s-rect _3 v | _3 s-box _4 s-cube`),
  },
]

const railItems = [
  { icon: 'r-gear', gap: 0 },
  { icon: 'r-cubes', gap: 25 },
  { icon: 'r-bow', gap: 12 },
  { icon: 'r-cyl', gap: 14 },
  { icon: 'r-tool', gap: 3, active: true },
  { icon: 'r-grid', gap: 5 },
  { icon: 'r-role', gap: 12 },
  { icon: 'r-books', gap: 13 },
  { icon: 'r-wifi', gap: 24 },
  { icon: 'r-web', gap: 24 },
  { icon: 'r-clock', gap: 23 },
  { icon: 'r-flame', gap: 12 },
]

const headers = ['名称', '刀轨', '刀具', '描述', '刀具号', '几何体', '方法', '进给', '速度', '程']

const blank = Array<string>(8).fill('')

const rows: Row[] = [
  { name: 'GENERIC_MACHINE', cells: ['', 'Generic Machine', '', '', '', '', '', ''] },
  { name: '未用项', kind: 'folder', cells: ['', 'mill_planar', '', '', '', '', '', ''] },
  { name: 'MILL', kind: 'group', cells: ['', 'Milling Tool-5 Par...', '1', '', '', '', '', ''] },
  { name: 'F300', kind: 'op', cells: ['MILL', 'CAVITY_MILL', '1', 'WORKPIECE', 'METHOD', '300 mmpm', '0 rpm', 'N'] },
  { name: 'F250', kind: 'op', selected: true, cells: ['MILL', 'CAVITY_MILL', '1', 'WORKPIECE', 'METHOD', '250 mmpm', '5000 rpm', 'N'] },
  { name: 'F600', kind: 'op', last: true, cells: ['MILL', 'CAVITY_MILL', '1', 'WORKPIECE', 'METHOD', '600 mmpm', '8000 rpm', 'N'] },
  ...Array.from({ length: 14 }, () => ({ name: '', cells: blank })),
]

const messageLines = [
  '收到一个错误 1770006',
  '文件名：o:\\ugnx100\\ip24\\src\\camsmom\\no\\ind\\mom_tcl_definitions.c，行号：537',
  '出错消息：中止消息：',
  '',
  ' F250 : f=15000.00000000000000000',
  '',
  '，处理程序：D:\\CNC\\后处理\\新建文件夹\\postprocessor(1)\\postprocessor\\jj.tcl，事件名：MOM_initial_move，请',
  '参见系统日志以获得更多详情',
]
</script>

<style>
html,
body {
  margin: 0;
  height: 100%;
  overflow: hidden;
  background: #fff;
}

.lat {
  font-size: 15.7px;
}
</style>

<style scoped>
.app {
  position: relative;
  width: 1517px;
  height: 719px;
  overflow: hidden;
  background: #fff;
  color: #1c1c1c;
  font: 15px/20px "Noto Sans", "Noto Sans CJK SC", sans-serif;
}

.defs {
  position: absolute;
  width: 0;
  height: 0;
}

.titlebar {
  display: flex;
  align-items: center;
  height: 33px;
}

.nx-logo {
  width: 43px;
  height: 30px;
  padding-left: 2px;
  box-sizing: border-box;
  border-right: 1px solid #d8d8d8;
  color: #8b9fb4;
  font: bold 25px/30px "Liberation Sans", sans-serif;
}

.title-text {
  margin-left: 6px;
  color: #111;
  white-space: pre;
}

.menubar {
  display: flex;
  align-items: center;
  height: 31px;
  padding-left: 5px;
  background: #c5d8d5;
  font-size: 14px;
}

.menu-icon {
  width: 22px;
  height: 22px;
  margin-right: 5px;
}

.menu-item {
  margin-right: 14px;
  white-space: nowrap;
}

.menu-item .lat {
  font-size: 15px;
}

.menu-item.wide {
  margin-left: 4px;
}

.menu-item.tight {
  margin-right: 10px;
}

.toolbar {
  display: flex;
  align-items: center;
  box-sizing: border-box;
  overflow: hidden;
  font-size: 14px;
}

.row-a {
  width: 1281px;
  height: 36px;
  border-right: 1px solid #e2e2e2;
  border-bottom: 2px solid #e2e2e2;
}

.row-b {
  width: 100%;
  height: 34px;
  border-bottom: 2px solid #e2e2e2;
}

.row-c {
  width: 381px;
  height: 34px;
  margin-left: 884px;
  border-right: 1px solid #e2e2e2;
  border-bottom: 2px solid #e2e2e2;
}

.row-d {
  height: 35px;
}

.grip {
  flex: none;
  width: 5px;
  height: 26px;
  background: radial-gradient(circle, #a8a8a8 0 1px, transparent 1.2px) 0 0 / 3px 3px repeat-y;
}

.sep {
  flex: none;
  width: 5px;
  height: 27px;
  background: linear-gradient(#dcdcdc, #dcdcdc) center / 1px 100% no-repeat;
}

.arrow {
  flex: none;
  position: relative;
  width: 12px;
  height: 10px;
}

.arrow::after {
  content: "";
  position: absolute;
  left: 2px;
  top: 3px;
  border: 4px solid transparent;
  border-top: 4px solid #111;
  border-bottom: 0;
}

.gap {
  flex: none;
  width: 0;
}

.tool {
  flex: none;
  display: flex;
  align-items: center;
  justify-content: center;
  box-sizing: border-box;
  width: 31px;
  height: 30px;
}

.tool svg {
  width: 24px;
  height: 24px;
}

.tool.off svg {
  filter: grayscale(1) opacity(0.36);
}

.tool.on {
  background: #c5d8d5;
  outline: 1px solid #a8c8c2;
  outline-offset: -1px;
}

.row-d .tool {
  width: 18px;
}

.row-d .tool svg {
  width: 16px;
  height: 16px;
  overflow: visible;
}

.start-label {
  flex: none;
  width: 30px;
  padding-left: 1px;
  font-size: 13px;
  box-sizing: border-box;
  white-space: nowrap;
}

.search {
  flex: none;
  display: flex;
  align-items: center;
  justify-content: space-between;
  box-sizing: border-box;
  width: 156px;
  height: 24px;
  margin: 0 5px 0 7px;
  padding: 0 4px 0 2px;
  border: 1px solid #aaa;
}

.search svg {
  width: 16px;
  height: 16px;
}

.select {
  flex: none;
  position: relative;
  box-sizing: border-box;
  height: 24px;
  border: 1px solid #aaa;
  color: #a8a8a8;
  line-height: 24px;
  white-space: nowrap;
}

.select i {
  position: absolute;
  right: 5px;
  top: 10px;
  border: 5px solid transparent;
  border-top: 4px solid #999;
  border-bottom: 0;
}

.sel-a {
  width: 165px;
  margin-left: 4px;
}

.sel-b {
  width: 176px;
  margin-left: 8px;
  padding: 0 2px;
}

.work {
  display: flex;
  box-sizing: border-box;
  height: 516px;
  border-top: 1px solid #9a9a9a;
}

.rail {
  flex: none;
  box-sizing: border-box;
  width: 30px;
  overflow: hidden;
  border-top: 1px solid #b8b8b8;
  border-right: 2px solid #b0b0b0;
  background: #d9d9d9;
}

.rail-item {
  display: flex;
  align-items: center;
  justify-content: center;
  width: 28px;
  height: 30px;
}

.rail-item svg {
  width: 26px;
  height: 26px;
}

.rail-item.gear {
  height: 22px;
}

.rail-item.gear svg {
  width: 16px;
  height: 16px;
}

.rail-item.active {
  position: relative;
  z-index: 1;
  width: 30px;
  height: 44px;
  background: #fff;
  box-shadow: 0 -1px 0 #b0b0b0, 0 1px 0 #b0b0b0;
}

.navigator {
  flex: none;
  box-sizing: border-box;
  width: 1085px;
  padding: 1px 0 0 7px;
  overflow: hidden;
}

.nav-title {
  display: flex;
  align-items: center;
  justify-content: space-between;
  box-sizing: border-box;
  width: 1061px;
  height: 30px;
  padding: 0 0 0 4px;
  color: #222;
}

.maximize {
  width: 11px;
  height: 9px;
  border: 1px solid #111;
  border-top-width: 3px;
}

.table {
  box-sizing: border-box;
  width: 1069px;
  border: 1px solid #e0e0e0;
  border-bottom: 0;
  overflow: hidden;
}

.thead,
.tr {
  display: grid;
  grid-template-columns: 200px 100px 100px 150px 100px 100px 100px 100px 100px 100px;
}

.thead {
  height: 25px;
  background: #f0f0f0;
}

.th {
  box-sizing: border-box;
  padding-left: 5px;
  border-right: 1px solid #dcdcdc;
  border-bottom: 1px solid #dcdcdc;
  line-height: 25px;
}

.tr {
  height: 24px;
  background: #fff;
}

.tr.odd {
  background: #f8f8f8;
}

.td {
  position: relative;
  display: flex;
  align-items: center;
  box-sizing: border-box;
  min-width: 0;
  padding-left: 4px;
  border-right: 1px solid #f0f0f0;
  border-bottom: 1px solid #eeeeee;
  white-space: nowrap;
}

.td.name {
  border-right: 1px solid #000;
  padding-left: 3px;
}

.tr.selected .td:not(.name) {
  background: #3399ff;
  color: #fff;
}

.td.folder {
  padding-left: 20px;
}

.td.folder .label {
  margin-top: -2px;
}

.td.group {
  padding-left: 5px;
}

.td.op {
  padding-left: 40px;
}

.td.op .label {
  flex: 1;
  height: 23px;
  padding-left: 3px;
  line-height: 25px;
}

.tr.selected .label {
  background: #3399ff;
  color: #fff;
}

.ico-folder {
  width: 16px;
  height: 16px;
  margin-right: 2px;
}

.minus {
  position: relative;
  flex: none;
  box-sizing: border-box;
  width: 11px;
  height: 11px;
  margin-right: 8px;
  border: 1px solid #c8c8c8;
  background: linear-gradient(#222, #222) center / 7px 1px no-repeat #fff;
}

.ico-mill {
  width: 9px;
  height: 18px;
  margin-right: 5px;
}

.ico-check {
  flex: none;
  width: 13px;
  height: 13px;
  margin-right: 1px;
}

.ico-check.path {
  margin-left: 1px;
}

.ico-op {
  flex: none;
  width: 16px;
  height: 16px;
}

.hline,
.vline {
  position: absolute;
}

.hline {
  top: 12px;
  height: 0;
  border-top: 1px dotted #888;
}

.vline {
  width: 0;
  border-left: 1px dotted #888;
}

.folder .hline {
  left: 9px;
  width: 10px;
}

.folder .vline {
  left: 9px;
  top: 12px;
  height: 18px;
}

.op .hline {
  left: 28px;
  width: 11px;
}

.op .vline {
  left: 28px;
  top: 0;
  height: 24px;
}

.op .vline.last {
  height: 13px;
}

.viewport {
  flex: none;
  box-sizing: border-box;
  width: 402px;
  border-top: 1px solid #ef9a3c;
  border-left: 2px solid #ef9a3c;
  background: linear-gradient(#b4b5b6, #e8e9eb);
}

.scene {
  display: block;
  width: 400px;
  height: 514px;
}

.axis {
  font: 12px "Liberation Sans", sans-serif;
}

.axis.red {
  fill: #c8403c;
}

.axis.green {
  fill: #4aa040;
}

.axis.violet {
  fill: #7a40e0;
}

.dialog {
  position: absolute;
  left: 199px;
  top: 408px;
  display: flex;
  flex-direction: column;
  box-sizing: border-box;
  width: 897px;
  height: 252px;
  border: 1px solid #aaa;
  border-top: 0;
  background: #e8e8e8;
}

.dialog-head {
  height: 33px;
  margin: 0 -1px;
  padding-left: 9px;
  background: #5b8783;
  color: #fff;
  line-height: 35px;
}

.dialog-body {
  display: flex;
  flex: 1;
  padding: 10px 0 0 18px;
}

.err {
  flex: none;
  width: 40px;
  height: 40px;
  margin-top: -1px;
}

.msg {
  margin-left: 20px;
  white-space: pre;
}

.msg p {
  height: 20px;
  margin: 0;
}

.dialog-foot {
  display: flex;
  justify-content: center;
  height: 38px;
  padding-right: 1px;
}

.ok {
  box-sizing: border-box;
  width: 84px;
  height: 27px;
  margin: 0;
  padding: 0;
  border: 1px solid #4ea3d8;
  background: #a2cfed;
  color: #1c1c1c;
  font: inherit;
  outline: 1px dotted #d0602a;
  outline-offset: -3px;
}

.mark {
  position: absolute;
  left: 1213px;
  top: 616px;
  box-sizing: border-box;
  width: 299px;
  height: 98px;
  padding: 8px 0 0 21px;
  background: #fff;
}

.mark svg {
  display: block;
  width: 72px;
  height: 82px;
}
</style>
